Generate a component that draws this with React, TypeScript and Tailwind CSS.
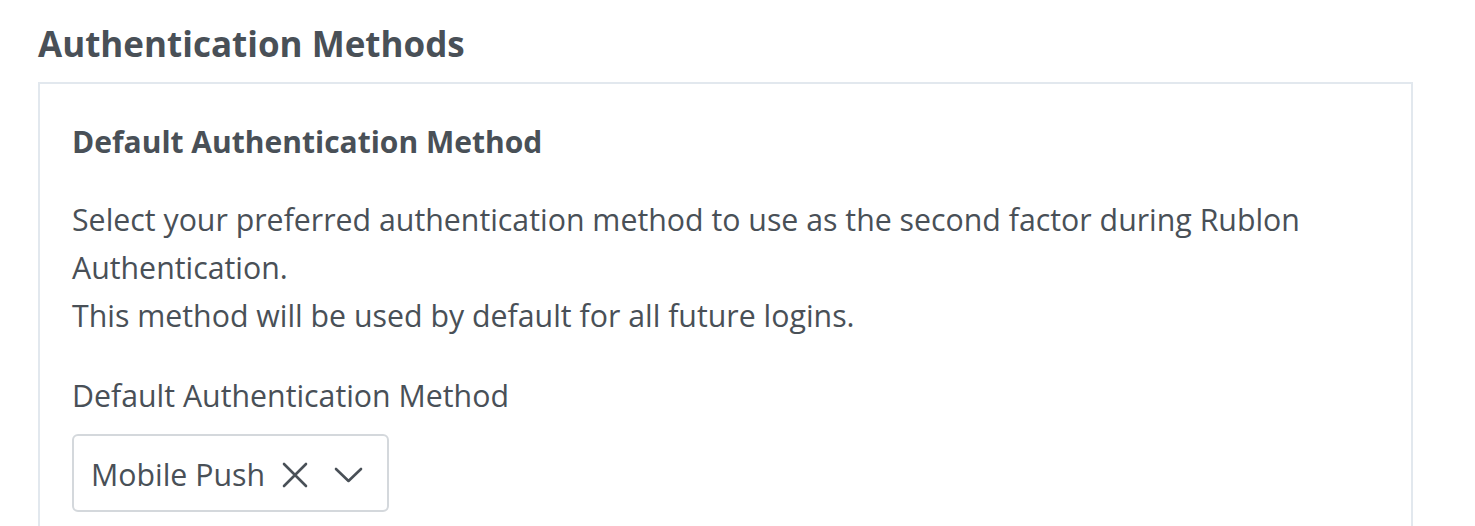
export default function App() {
  return (
    <div className="min-h-[526px] bg-white pl-[38px] pr-[62px] pt-[24px] font-['Open_Sans',sans-serif] text-[#495057]">
      <h2 className="text-[35px] font-bold leading-[40px]">Authentication Methods</h2>
      <div className="mt-[18px] border-2 border-[#e2e8ee] px-[32px] pt-[38px] pb-8">
        <h3 className="text-[30px] font-bold leading-[40px]">Default Authentication Method</h3>
        <p className="mt-[34px] text-[30.3px] leading-[48px]">
          Select your preferred authentication method to use as the second factor during Rublon Authentication.
          <br />
          This method will be used by default for all future logins.
        </p>
        <label className="mt-[32px] block text-[30.3px] leading-[48px]">Default Authentication Method</label>
        <div className="mt-[14px] inline-flex h-[78px] w-[317px] items-center rounded-md border-2 border-[#d4d8dc] pl-[17px] pt-[4px]">
          <span className="text-[30.3px] leading-none">Mobile Push</span>
          <svg className="ml-[17px] h-[26px] w-[26px]" viewBox="0 0 26 26" fill="none" stroke="currentColor" strokeWidth="2.6" strokeLinecap="round">
            <path d="M2 2 24 24M24 2 2 24" />
          </svg>
          <svg className="ml-[26px] h-[16px] w-[29px]" viewBox="0 0 29 16" fill="none" stroke="currentColor" strokeWidth="2.6" strokeLinecap="round" strokeLinejoin="round">
            <path d="M2 2 14.5 14 27 2" />
          </svg>
        </div>
      </div>
    </div>
  )
}
